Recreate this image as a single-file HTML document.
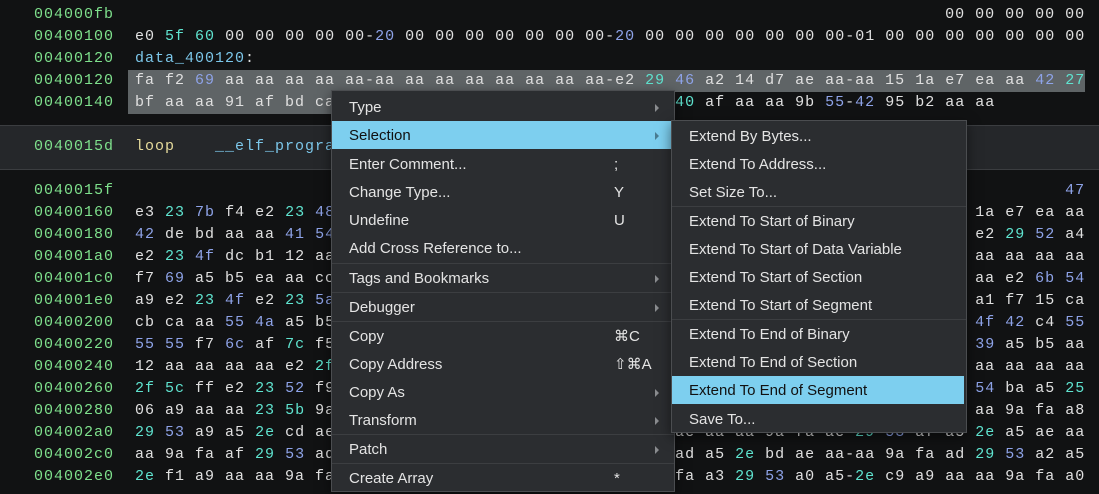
<!DOCTYPE html>
<html><head><meta charset="utf-8">
<style>
html,body{margin:0;padding:0;}
body{width:1099px;height:479px;background:#111213;overflow:hidden;position:relative;font-family:"Liberation Mono",monospace;}
.r{position:absolute;left:0;height:22px;line-height:22px;font-size:15px;letter-spacing:1px;white-space:pre;color:#e0e0e0;}
.a{position:absolute;left:34px;color:#7ee08c;}
.h{position:absolute;left:135px;}
.c{color:#5fe3cf}.b{color:#8ea3e8}.l{color:#7cc7ea}.y{color:#e6db9c}
.sel{position:absolute;background:#5f6466;}
.band{position:absolute;left:0;top:125px;width:1099px;height:43px;background:#25272a;border-top:1px solid #3b3d40;border-bottom:1px solid #3b3d40;}
.menu{position:absolute;background:#2b2d30;border:1px solid #4b4d50;font-family:"Liberation Sans",sans-serif;font-size:15px;color:#e4e4e4;box-shadow:0 4px 12px rgba(0,0,0,.5);}
.it{position:absolute;left:0;right:0;height:28px;line-height:30px;padding-left:17px;white-space:nowrap;}
.hl{background:#7dcfef;color:#111;}
.sc{position:absolute;left:282px;top:0;}
.ar{position:absolute;left:323px;top:11px;width:0;height:0;border-left:4px solid #8a8c8f;border-top:4px solid transparent;border-bottom:4px solid transparent;}
.sp{position:absolute;left:0;right:0;height:1px;background:#3c3e41;}
</style></head><body>

<div class="sel" style="left:128px;top:70px;width:957px;height:22px"></div>
<div class="sel" style="left:128px;top:92px;width:220px;height:22px"></div>

<div class="r" style="top:4px"><span class="a">004000fb</span><span class="h">                                                                                 00 00 00 00 00</span></div>
<div class="r" style="top:26px"><span class="a">00400100</span><span class="h">e0 <span class="c">5f</span> <span class="c">60</span> 00 00 00 00 00-<span class="b">20</span> 00 00 00 00 00 00 00-<span class="b">20</span> 00 00 00 00 00 00 00-01 00 00 00 00 00 00 00</span></div>
<div class="r" style="top:48px"><span class="a">00400120</span><span class="h"><span class="l">data_400120</span>:</span></div>
<div class="r" style="top:70px"><span class="a">00400120</span><span class="h">fa f2 <span class="b">69</span> aa aa aa aa aa-aa aa aa aa aa aa aa aa-e2 <span class="c">29</span> <span class="b">46</span> a2 14 d7 ae aa-aa 15 1a e7 ea aa <span class="b">42</span> <span class="c">27</span></span></div>
<div class="r" style="top:92px"><span class="a">00400140</span><span class="h">bf aa aa 91 af bd ca aa aa aa aa aa aa aa aa aa aa aa <span class="c">40</span> af aa aa 9b <span class="b">55</span>-<span class="b">42</span> 95 b2 aa aa</span></div>

<div class="band"></div>
<div class="r" style="top:136px"><span class="a">0040015d</span><span class="h"><span class="y">loop</span>    <span class="l">__elf_program_headers</span></span></div>

<div class="r" style="top:180px"><span class="a">0040015f</span><span class="h">                                                                                             <span class="b">47</span></span></div>
<div class="r" style="top:202px"><span class="a">00400160</span><span class="h">e3 <span class="c">23</span> <span class="b">7b</span> f4 e2 <span class="c">23</span> <span class="b">48</span> aa aa aa aa aa aa aa aa aa aa aa aa aa aa aa aa aa aa aa aa aa 1a e7 ea aa</span></div>
<div class="r" style="top:224px"><span class="a">00400180</span><span class="h"><span class="b">42</span> de bd aa aa <span class="b">41</span> <span class="b">54</span> aa aa aa aa aa aa aa aa aa aa aa aa aa aa aa aa aa aa aa aa aa e2 <span class="c">29</span> <span class="b">52</span> a4</span></div>
<div class="r" style="top:246px"><span class="a">004001a0</span><span class="h">e2 <span class="c">23</span> <span class="b">4f</span> dc b1 12 aa aa aa aa aa aa aa aa aa aa aa aa aa aa aa aa aa aa aa aa aa aa aa aa aa aa</span></div>
<div class="r" style="top:268px"><span class="a">004001c0</span><span class="h">f7 <span class="b">69</span> a5 b5 ea aa cc aa aa aa aa aa aa aa aa aa aa aa aa aa aa aa aa aa aa aa aa aa aa e2 <span class="b">6b</span> <span class="b">54</span></span></div>
<div class="r" style="top:290px"><span class="a">004001e0</span><span class="h">a9 e2 <span class="c">23</span> <span class="b">4f</span> e2 <span class="c">23</span> <span class="b">5a</span> aa aa aa aa aa aa aa aa aa aa aa aa aa aa aa aa aa aa aa aa aa a1 f7 15 ca</span></div>
<div class="r" style="top:312px"><span class="a">00400200</span><span class="h">cb ca aa <span class="b">55</span> <span class="b">4a</span> a5 b5 aa aa aa aa aa aa aa aa aa aa aa aa aa aa aa aa aa aa aa aa aa <span class="b">4f</span> <span class="b">42</span> c4 <span class="b">55</span></span></div>
<div class="r" style="top:334px"><span class="a">00400220</span><span class="h"><span class="b">55</span> <span class="b">55</span> f7 <span class="b">6c</span> af <span class="c">7c</span> f5 aa aa aa aa aa aa aa aa aa aa aa aa aa aa aa aa aa aa aa aa aa <span class="b">39</span> a5 b5 aa</span></div>
<div class="r" style="top:356px"><span class="a">00400240</span><span class="h">12 aa aa aa aa e2 <span class="c">2f</span> aa aa aa aa aa aa aa aa aa aa aa aa aa aa aa aa aa aa aa aa aa aa aa aa aa</span></div>
<div class="r" style="top:378px"><span class="a">00400260</span><span class="h"><span class="c">2f</span> <span class="c">5c</span> ff e2 <span class="c">23</span> <span class="b">52</span> f9 aa aa aa aa aa aa aa aa aa aa aa aa aa aa aa aa aa aa aa aa aa <span class="b">54</span> ba a5 <span class="c">25</span></span></div>
<div class="r" style="top:400px"><span class="a">00400280</span><span class="h">06 a9 aa aa <span class="c">23</span> <span class="c">5b</span> 9a aa aa aa aa aa aa aa aa aa aa aa aa aa aa aa aa aa aa aa aa aa aa 9a fa a8</span></div>
<div class="r" style="top:422px"><span class="a">004002a0</span><span class="h"><span class="c">29</span> <span class="b">53</span> a9 a5 <span class="c">2e</span> cd ae aa aa aa aa aa aa aa aa aa aa aa ae aa aa 9a fa ae-<span class="c">29</span> <span class="b">53</span> af a5 <span class="c">2e</span> a5 ae aa</span></div>
<div class="r" style="top:444px"><span class="a">004002c0</span><span class="h">aa 9a fa af <span class="c">29</span> <span class="b">53</span> ad aa aa aa aa aa aa aa aa aa aa aa ad a5 <span class="c">2e</span> bd ae aa-aa 9a fa ad <span class="c">29</span> <span class="b">53</span> a2 a5</span></div>
<div class="r" style="top:466px"><span class="a">004002e0</span><span class="h"><span class="c">2e</span> f1 a9 aa aa 9a fa aa aa aa aa aa aa aa aa aa aa aa fa a3 <span class="c">29</span> <span class="b">53</span> a0 a5-<span class="c">2e</span> c9 a9 aa aa 9a fa a0</span></div>

<div class="menu" style="left:331px;top:90px;width:342px;height:400px;">
 <div class="it" style="top:2px">Type<span class="ar"></span></div>
 <div class="it hl" style="top:30px">Selection<span class="ar" style="border-left-color:#4a7d92"></span></div>
 <div class="it" style="top:59px">Enter Comment...<span class="sc">;</span></div>
 <div class="it" style="top:87px">Change Type...<span class="sc">Y</span></div>
 <div class="it" style="top:115px">Undefine<span class="sc">U</span></div>
 <div class="it" style="top:143px">Add Cross Reference to...</div>
 <div class="sp" style="top:172px"></div>
 <div class="it" style="top:173px">Tags and Bookmarks<span class="ar"></span></div>
 <div class="sp" style="top:201px"></div>
 <div class="it" style="top:202px">Debugger<span class="ar"></span></div>
 <div class="sp" style="top:230px"></div>
 <div class="it" style="top:231px">Copy<span class="sc">⌘C</span></div>
 <div class="it" style="top:259px">Copy Address<span class="sc">⇧⌘A</span></div>
 <div class="it" style="top:287px">Copy As<span class="ar"></span></div>
 <div class="it" style="top:315px">Transform<span class="ar"></span></div>
 <div class="sp" style="top:343px"></div>
 <div class="it" style="top:344px">Patch<span class="ar"></span></div>
 <div class="sp" style="top:372px"></div>
 <div class="it" style="top:373px">Create Array<span class="sc">*</span></div>
</div>

<div class="menu" style="left:671px;top:120px;width:294px;height:311px;">
 <div class="it" style="top:1px">Extend By Bytes...</div>
 <div class="it" style="top:29px">Extend To Address...</div>
 <div class="it" style="top:57px">Set Size To...</div>
 <div class="sp" style="top:85px"></div>
 <div class="it" style="top:86px">Extend To Start of Binary</div>
 <div class="it" style="top:114px">Extend To Start of Data Variable</div>
 <div class="it" style="top:142px">Extend To Start of Section</div>
 <div class="it" style="top:170px">Extend To Start of Segment</div>
 <div class="sp" style="top:198px"></div>
 <div class="it" style="top:199px">Extend To End of Binary</div>
 <div class="it" style="top:227px">Extend To End of Section</div>
 <div class="it hl" style="top:255px;right:2px">Extend To End of Segment</div>
 <div class="it" style="top:284px">Save To...</div>
</div>
</body></html>
